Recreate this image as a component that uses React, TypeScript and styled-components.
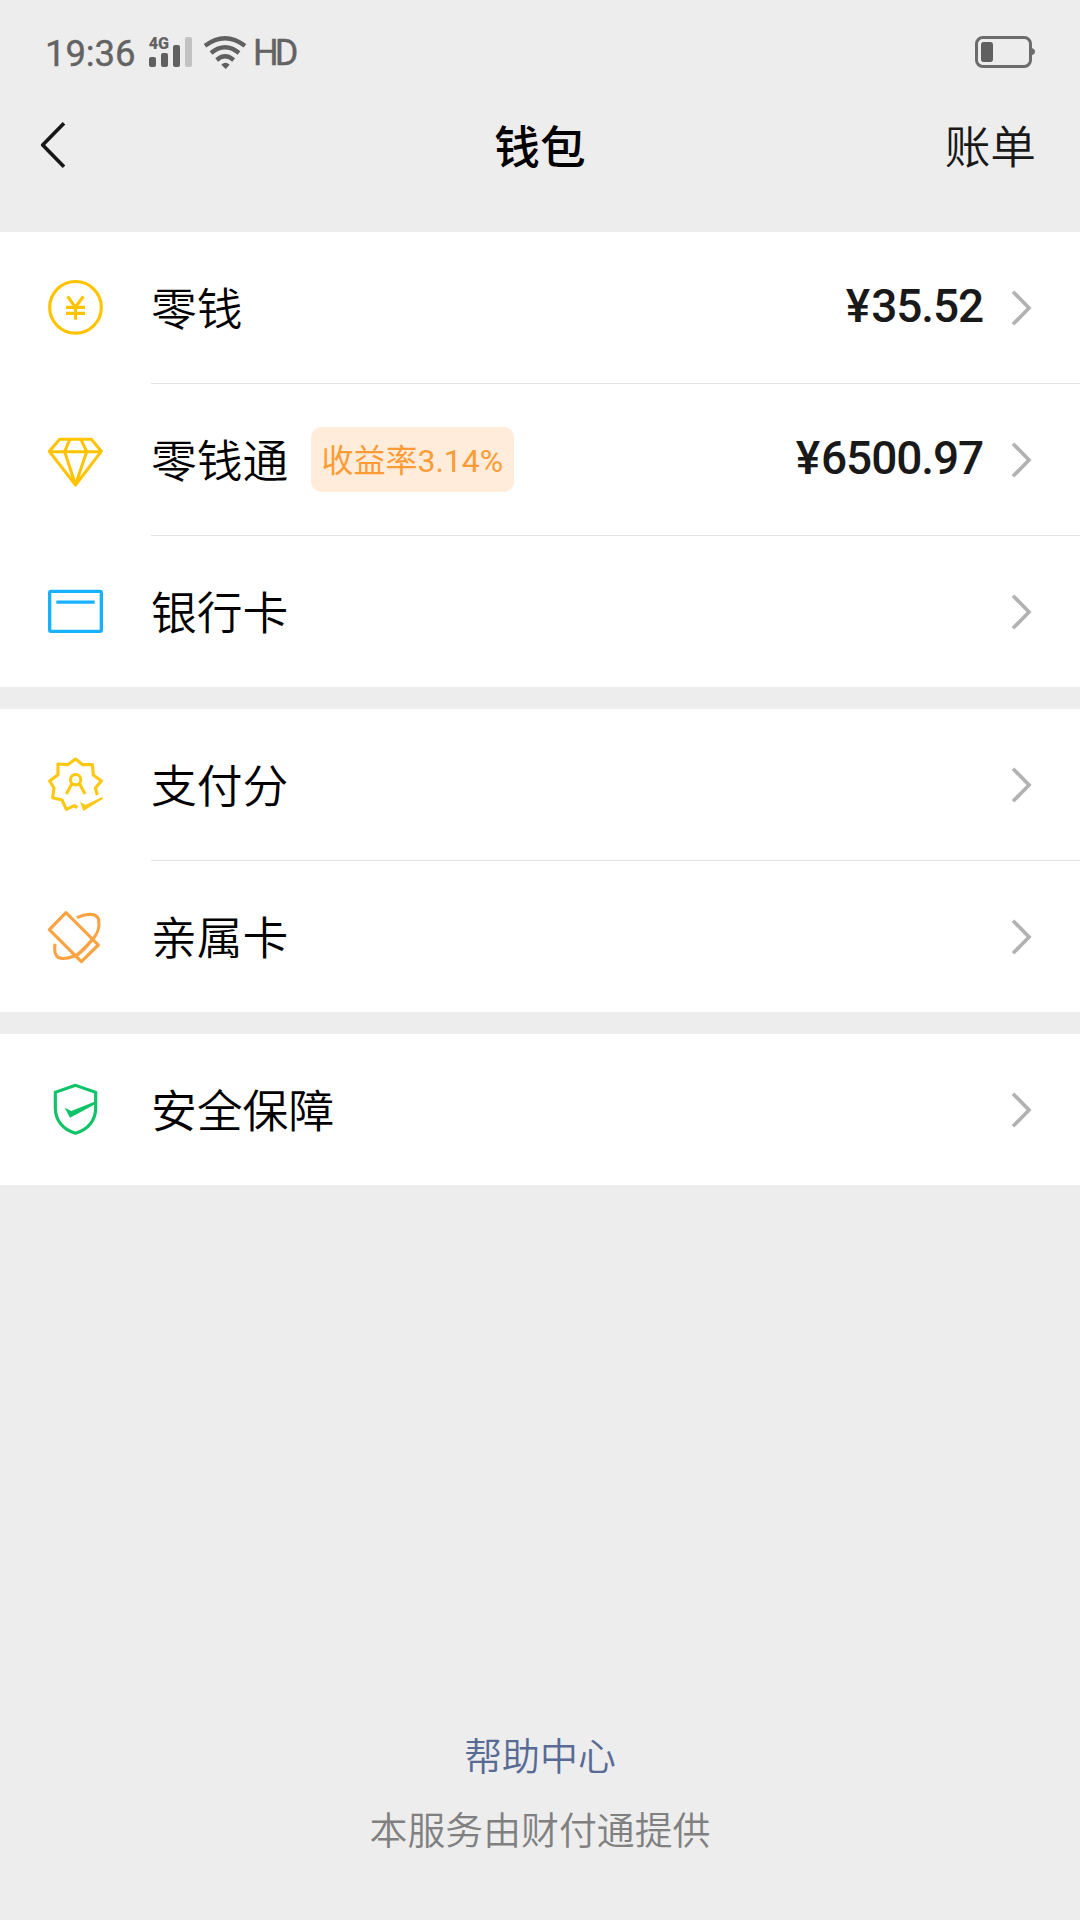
import React from "react";
import styled, { createGlobalStyle } from "styled-components";

const GlobalStyle = createGlobalStyle`
  * { box-sizing: border-box; }
  body {
    margin: 0;
    background: #ededed;
    font-family: Roboto, "Noto Sans CJK SC", sans-serif;
  }
`;

const Page = styled.main`
  display: flex;
  flex-direction: column;
  width: 1080px;
  height: 1920px;
  background: #ededed;
  overflow: hidden;
`;

const StatusBar = styled.header`
  display: flex;
  align-items: center;
  height: 106px;
  padding: 0 44px 0 45px;
  color: #636363;
`;

const Time = styled.span`
  width: 103px;
  padding-top: 1px;
  font-size: 36.5px;
  line-height: 44px;
  letter-spacing: -0.1px;
  white-space: nowrap;
  -webkit-text-stroke: 0.4px currentColor;
`;

const Network = styled.span`
  margin-left: 6px;
  flex: 1;
  font-size: 36px;
  line-height: 44px;
  letter-spacing: -4px;
  -webkit-text-stroke: 0.4px currentColor;
`;

const Glyph = styled.svg<{ $w: number; $h: number; $gap?: number }>`
  display: block;
  flex: none;
  width: ${(p) => p.$w}px;
  height: ${(p) => p.$h}px;
  margin-left: ${(p) => p.$gap ?? 0}px;
`;

const NavBar = styled.nav`
  display: grid;
  grid-template-columns: 1fr auto 1fr;
  align-items: center;
  height: 126px;
  padding: 0 44px 48px 38px;
  flex: none;
`;

const Title = styled.h1`
  margin: 0 0 0 6px;
  padding-top: 8px;
  font-size: 45.7px;
  line-height: 66px;
  font-weight: 500;
  color: #000;
`;

const Bill = styled.span`
  justify-self: end;
  padding-top: 8px;
  font-size: 45.7px;
  line-height: 66px;
  font-weight: 350;
  color: #191919;
`;

const Group = styled.section`
  flex: none;
  margin-bottom: 22px;
  background: #fff;
`;

const Row = styled.div`
  display: flex;
  padding-left: 45px;
`;

const IconSlot = styled.div`
  display: flex;
  align-items: center;
  width: 106px;
  height: 151px;
`;

const RowBody = styled.div<{ $divided: boolean }>`
  display: flex;
  align-items: center;
  flex: 1;
  height: ${(p) => (p.$divided ? 152 : 151)}px;
  padding-right: 48px;
  border-bottom: ${(p) => (p.$divided ? "1px solid #e3e3e3" : "none")};
`;

const Label = styled.span`
  padding-top: 7px;
  font-size: 45.8px;
  line-height: 66px;
  font-weight: 350;
  color: #000;
`;

const Rate = styled.span`
  display: flex;
  align-items: center;
  height: 65px;
  margin-left: 23px;
  padding: 2px 11px 0 10px;
  border-radius: 10px;
  background: #ffecdb;
  color: #fd9c36;
  font-size: 32px;
  line-height: 46px;
  font-weight: 400;
`;

const Amount = styled.span`
  display: flex;
  margin-left: auto;
  margin-right: 28px;
  padding-bottom: 3px;
  font-size: 46px;
  line-height: 60px;
  font-weight: 500;
  letter-spacing: -1.1px;
  color: #191919;
`;

const Currency = styled.span`
  margin-right: 2px;
`;

const ChevronSlot = styled.span<{ $push: boolean }>`
  margin-left: ${(p) => (p.$push ? "auto" : "0")};
`;

const Footer = styled.footer`
  display: flex;
  flex-direction: column;
  align-items: center;
  gap: 18px;
  margin-top: auto;
  padding-bottom: 61px;
  font-size: 37.9px;
  line-height: 56px;
  font-weight: 350;
`;

const HelpLink = styled.a`
  color: #576b95;
`;

const Provider = styled.span`
  color: #808080;
`;

const SignalIcon = () => (
  <Glyph $w={46} $h={40} viewBox="354 39 138 120">
    <text x="356" y="87" fontFamily="Roboto" fontWeight="900" fontSize="50" textLength="61" lengthAdjust="spacingAndGlyphs" fill="#636363">4G</text>
    <rect x="357" y="111" width="21" height="30" rx="6" fill="#606060" />
    <rect x="393" y="99" width="21" height="42" rx="6" fill="#606060" />
    <rect x="429" y="75" width="21" height="66" rx="6" fill="#606060" />
    <rect x="465" y="51" width="21" height="90" rx="6" fill="#c1c1c1" />
  </Glyph>
);

const WifiIcon = () => (
  <Glyph $w={44} $h={40} $gap={9} viewBox="519 39 132 120" fill="none" stroke="#606060" strokeWidth="13">
    <path d="M525 77Q585 32 645 77M543 99Q585 65 627 99M560 120Q585 98 611 120" />
    <path d="M574 134Q586 123 599 134L587 147Z" fill="#606060" stroke="none" />
  </Glyph>
);

const BatteryIcon = () => (
  <Glyph $w={62} $h={36} viewBox="102 45 186 108">
    <rect x="109.500" y="52.500" width="162" height="87" rx="19" fill="none" stroke="#6c6c6c" strokeWidth="9" />
    <rect x="123" y="66" width="36" height="60" rx="8" fill="#606060" />
    <path d="M274 84Q285 86 285 95Q285 103 274 106Z" fill="#6c6c6c" />
  </Glyph>
);

const BackIcon = () => (
  <Glyph $w={30} $h={50} viewBox="24 300 90 150" fill="none" stroke="#171717" strokeWidth="11" strokeLinejoin="round">
    <path d="M102 310L38 375L102 440" />
  </Glyph>
);

const ChevronIcon = () => (
  <Glyph $w={21} $h={37} viewBox="693 87 63 111" fill="none" stroke="#b2b2b2" strokeWidth="11">
    <path d="M699 95L747 144L699 193" />
  </Glyph>
);

const CoinIcon = () => (
  <Glyph $w={61} $h={61} viewBox="45 51 183 183" fill="none" stroke="#ffc300" strokeWidth="9.500">
    <circle cx="136.500" cy="142" r="77.500" />
    <path d="M113 109L136 142L160 109M136.500 140V179M108 142H165M108 160H165" />
  </Glyph>
);

const DiamondIcon = () => (
  <Glyph $w={61} $h={61} viewBox="45 507 183 183" fill="none" stroke="#ffc300" strokeWidth="9" strokeLinejoin="round">
    <path d="M89 538H184L214 574L136.500 675L58 574ZM58 575H214M119 539L104 575L136.500 674L170 575L153 539" />
  </Glyph>
);

const CardIcon = () => (
  <Glyph $w={61} $h={61} viewBox="45 63 183 183" fill="none" stroke="#18b1ff" strokeWidth="10">
    <rect x="59" y="94" width="155" height="120" rx="4" />
    <path d="M79 126.500H194" />
  </Glyph>
);

const ScoreIcon = () => (
  <Glyph $w={61} $h={61} viewBox="45 72 183 183" fill="none" stroke="#fdc812" strokeWidth="9.500" strokeLinejoin="round">
    <path d="M202 195L196 174L214 153L190 135L187 104H158L136.500 87L113 104L84 102V134L59 153L72 174L68 203L96 210L109 238L133 227L142 233" />
    <circle cx="137" cy="149" r="15.500" />
    <path d="M126 160Q119 174 109 192M148 160Q156 175 165 192" />
    <path d="M150 215L166 225L218 200V207L160 243Z" fill="#fdc812" stroke="none" />
  </Glyph>
);

const FamilyIcon = () => (
  <Glyph $w={61} $h={61} viewBox="45 528 183 183" fill="none" stroke="#fba343" strokeWidth="9.500" strokeLinejoin="round">
    <path d="M108 548L58 599L154 695L205 645Z" />
    <path d="M187 630L138 679" />
    <path d="M141 563C166 550 202 547 206 570C210 592 201 616 184 632C166 656 145 674 132 679C112 686 90 688 81 679C74 672 73 656 75 641" />
  </Glyph>
);

const ShieldIcon = () => (
  <Glyph $w={61} $h={61} viewBox="45 57 183 183" fill="none" stroke="#0fc468" strokeWidth="9.500">
    <path d="M136.500 76L76 97V145C76 180 98 209 136.500 220C175 209 197 180 197 145V97Z" />
    <path d="M104 143L124 153L197 124V132L120 173Z" fill="#0fc468" stroke="none" />
  </Glyph>
);

type Item = {
  label: string;
  icon: React.ReactNode;
  amount?: string;
  rate?: string;
};

const groups: Item[][] = [
  [
    { label: "零钱", icon: <CoinIcon />, amount: "35.52" },
    { label: "零钱通", icon: <DiamondIcon />, amount: "6500.97", rate: "收益率3.14%" },
    { label: "银行卡", icon: <CardIcon /> },
  ],
  [
    { label: "支付分", icon: <ScoreIcon /> },
    { label: "亲属卡", icon: <FamilyIcon /> },
  ],
  [{ label: "安全保障", icon: <ShieldIcon /> }],
];

export default function App() {
  return (
    <Page>
      <GlobalStyle />
      <StatusBar>
        <Time>19:36</Time>
        <SignalIcon />
        <WifiIcon />
        <Network>HD</Network>
        <BatteryIcon />
      </StatusBar>
      <NavBar>
        <BackIcon />
        <Title>钱包</Title>
        <Bill>账单</Bill>
      </NavBar>
      {groups.map((items, g) => (
        <Group key={g}>
          {items.map((item, i) => (
            <Row key={item.label}>
              <IconSlot>{item.icon}</IconSlot>
              <RowBody $divided={i < items.length - 1}>
                <Label>{item.label}</Label>
                {item.rate && <Rate>{item.rate}</Rate>}
                {item.amount && (
                  <Amount>
                    <Currency>¥</Currency>
                    {item.amount}
                  </Amount>
                )}
                <ChevronSlot $push={!item.amount}>
                  <ChevronIcon />
                </ChevronSlot>
              </RowBody>
            </Row>
          ))}
        </Group>
      ))}
      <Footer>
        <HelpLink>帮助中心</HelpLink>
        <Provider>本服务由财付通提供</Provider>
      </Footer>
    </Page>
  );
}
